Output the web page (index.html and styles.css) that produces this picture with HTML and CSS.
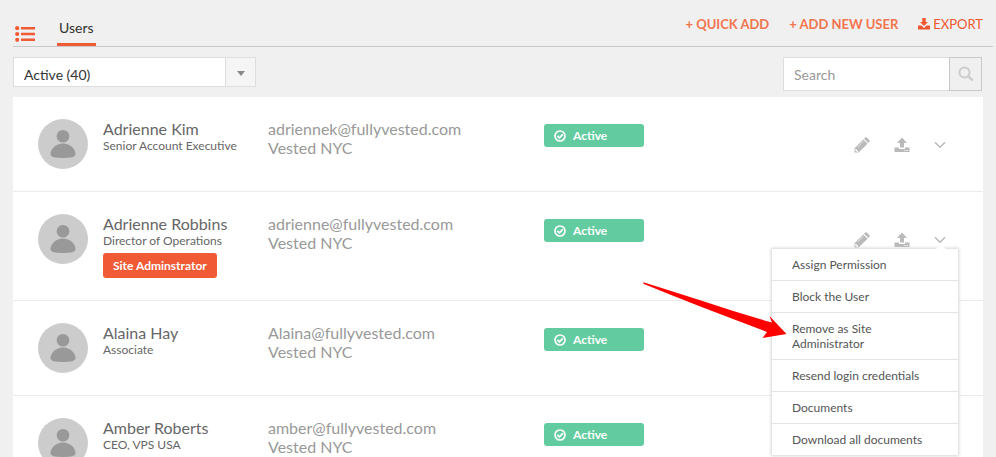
FILE: index.html
```html
<!DOCTYPE html>
<html lang="en">
<head>
    <meta charset="UTF-8">
    <meta name="viewport" content="width=device-width, initial-scale=1.0">
    <title>Users</title>
    <link rel="stylesheet" href="styles.css">
</head>
<body>
    <!-- shared icons -->
    <svg class="sprite" aria-hidden="true">
        <symbol id="avatar" viewBox="0 0 50 50">
            <circle cx="25" cy="25" r="25" fill="#cccccc"/>
            <circle cx="25" cy="17.3" r="6.3" fill="#999999"/>
            <path d="M12.5 35.500c0-6 5.500-11 12.500-11s12.500 5 12.500 11q0 3.500-12.500 3.500t-12.500-3.500z" fill="#999999"/>
        </symbol>
        <symbol id="check" viewBox="0 0 12 12">
            <circle cx="6" cy="6" r="5" fill="none" stroke="#fff" stroke-width="1.700"/>
            <path d="M3.400 5.900l2 2 3.400-3.500" fill="none" stroke="#fff" stroke-width="1.900"/>
        </symbol>
        <symbol id="pencil" viewBox="0 0 16 16">
            <path d="M0.500 15.500V11.300L9.300 2.500l4.200 4.200L4.700 15.500z" fill="#b9b9b9"/>
            <path d="M10 1.800l1.200-1.200q.8-.8 1.600 0l2.600 2.600q.8.8 0 1.600L14.200 6z" fill="#b9b9b9"/>
            <path d="M1.700 11.900l2.400 2.400-1 .4-1.800-1.800zM3.600 10l5.700-5.700" fill="#fff" stroke="#fff" stroke-width=".6"/>
        </symbol>
        <symbol id="upload" viewBox="0 0 16 16">
            <path d="M8 .5l5 5.500H10v4.500H6V6H3z" fill="#b9b9b9"/>
            <path d="M.5 10.500H5v1.500h6v-1.500h4.500V15H.5z" fill="#b9b9b9"/>
            <path d="M10.500 13h1.200v1h-1.200zM12.800 13H14v1h-1.200z" fill="#fff"/>
        </symbol>
        <symbol id="chevron" viewBox="0 0 12 8">
            <path d="M1 1.200l5 5 5-5" fill="none" stroke="#b9b9b9" stroke-width="1.500"/>
        </symbol>
    </svg>

    <header class="header">
        <nav class="tabs">
            <a class="list-link" href="#" aria-label="List">
                <svg width="20" height="16" viewBox="0 0 20 16" fill="#f05a35">
                    <circle cx="2.200" cy="2.200" r="2.100"/><circle cx="2.200" cy="8" r="2.100"/><circle cx="2.200" cy="13.800" r="2.100"/>
                    <path d="M6 1h14v2.500H6zM6 6.800h14v2.500H6zM6 12.500h14V15H6z"/>
                </svg>
            </a>
            <a class="tab" href="#">Users</a>
        </nav>
        <div class="links">
            <a class="add" href="#">+ QUICK ADD</a>
            <a class="add" href="#">+ ADD NEW USER</a>
            <a class="export" href="#">
                <svg width="12" height="12" viewBox="0 0 12 12" fill="#f0562f"><path d="M4.300 0h3.400v4H10L6 8 2 4h2.300zM0 7.500h3.500L6 10l2.500-2.500H12V11.500H0z"/></svg>EXPORT</a>
        </div>
    </header>

    <main class="content">
        <form class="toolbar">
            <div class="select-box">
                <select class="select" aria-label="Status">
                    <option>Active (40)</option>
                </select>
            </div>
            <div class="search">
                <input class="search-input" type="text" placeholder="Search" aria-label="Search">
                <button class="search-btn" type="button" aria-label="Search">
                    <svg width="16" height="16" viewBox="0 0 16 16" fill="none" stroke="#cccccc"><circle cx="6.500" cy="6.500" r="5" stroke-width="2"/><path d="M10.300 10.300l4.400 4.400" stroke-width="2.400"/></svg>
                </button>
            </div>
        </form>

        <ul class="users">
            <li class="user">
                <svg class="avatar"><use href="#avatar"/></svg>
                <div class="info">
                    <div class="name">Adrienne Kim</div>
                    <div class="job">Senior Account Executive</div>
                </div>
                <div class="contact">
                    <div>adriennek@fullyvested.com</div>
                    <div>Vested NYC</div>
                </div>
                <div class="status"><svg class="check"><use href="#check"/></svg>Active</div>
                <div class="actions">
                    <button class="icon-btn" type="button" aria-label="Edit"><svg class="icon"><use href="#pencil"/></svg></button>
                    <button class="icon-btn" type="button" aria-label="Upload"><svg class="icon"><use href="#upload"/></svg></button>
                    <button class="icon-btn" type="button" aria-label="More"><svg class="chevron"><use href="#chevron"/></svg></button>
                </div>
            </li>
            <li class="user">
                <svg class="avatar"><use href="#avatar"/></svg>
                <div class="info">
                    <div class="name">Adrienne Robbins</div>
                    <div class="job">Director of Operations</div>
                    <span class="role">Site Adminstrator</span>
                </div>
                <div class="contact">
                    <div>adrienne@fullyvested.com</div>
                    <div>Vested NYC</div>
                </div>
                <div class="status"><svg class="check"><use href="#check"/></svg>Active</div>
                <div class="actions">
                    <button class="icon-btn" type="button" aria-label="Edit"><svg class="icon"><use href="#pencil"/></svg></button>
                    <button class="icon-btn" type="button" aria-label="Upload"><svg class="icon"><use href="#upload"/></svg></button>
                    <button class="icon-btn" type="button" aria-label="More" aria-expanded="true"><svg class="chevron"><use href="#chevron"/></svg></button>
                    <ul class="menu">
                        <li><a href="#">Assign Permission</a></li>
                        <li><a href="#">Block the User</a></li>
                        <li><a href="#">Remove as Site Administrator</a></li>
                        <li><a href="#">Resend login credentials</a></li>
                        <li><a href="#">Documents</a></li>
                        <li><a href="#">Download all documents</a></li>
                    </ul>
                    <!-- pointer to the remove item -->
                    <svg class="pointer" width="144" height="58" viewBox="0 0 144 58"><path d="M.5.300L58 18.500Q92 30 129 40.500L126.500 34 143.500 52l-24 4 4.500-6Q90 37 56 24Q28 13 .3 1.700z" fill="#ff0000"/></svg>
                </div>
            </li>
            <li class="user">
                <svg class="avatar"><use href="#avatar"/></svg>
                <div class="info">
                    <div class="name">Alaina Hay</div>
                    <div class="job">Associate</div>
                </div>
                <div class="contact">
                    <div>Alaina@fullyvested.com</div>
                    <div>Vested NYC</div>
                </div>
                <div class="status"><svg class="check"><use href="#check"/></svg>Active</div>
            </li>
            <li class="user">
                <svg class="avatar"><use href="#avatar"/></svg>
                <div class="info">
                    <div class="name">Amber Roberts</div>
                    <div class="job">CEO, VPS USA</div>
                </div>
                <div class="contact">
                    <div>amber@fullyvested.com</div>
                    <div>Vested NYC</div>
                </div>
                <div class="status"><svg class="check"><use href="#check"/></svg>Active</div>
            </li>
        </ul>
    </main>
</body>
</html>
```
FILE: styles.css
```css
*{
    box-sizing: border-box;
    margin: 0;
    padding: 0;
}
body{
    height: 100vh;
    overflow: hidden;
    background-color: #f0f0f0;
    font-family: Lato, "Liberation Sans", sans-serif;
    font-size: 14px;
    color: #333;
}
ul{
    list-style: none;
}
a{
    text-decoration: none;
    color: inherit;
}
svg{
    display: block;
}
button, input, select{
    font: inherit;
}
.sprite{
    position: absolute;
    width: 0;
    height: 0;
}

/* header */
.header{
    display: flex;
    justify-content: space-between;
    height: 47px;
    margin: 0 3px 0 13px;
    border-bottom: 1px solid #c8c8c8;
}
.tabs{
    display: flex;
    align-items: flex-end;
    gap: 22px;
    padding-left: 2px;
}
.list-link{
    padding-bottom: 4px;
}
.tab{
    padding: 0 2px 5px;
    line-height: 20px;
    border-bottom: 3px solid #f05a35;
}
.links{
    display: flex;
    align-items: flex-start;
    gap: 20px;
    padding: 14px 10px 0 0;
    font-size: 13px;
    line-height: 20px;
}
.add{
    font-weight: bold;
    color: #f4744e;
}
.export{
    display: flex;
    align-items: center;
    gap: 3px;
    color: #f0562f;
}

/* filter and search */
.content{
    padding: 10px 13px 0;
}
.toolbar{
    display: flex;
    justify-content: space-between;
    align-items: flex-start;
    margin-bottom: 6px;
}
.select-box{
    position: relative;
    width: 243px;
    border: 1px solid #dedede;
    background-color: #fff;
}
.select-box::before{
    content: "";
    position: absolute;
    top: 0;
    right: 0;
    width: 29px;
    height: 100%;
    border-left: 1px solid #dedede;
    background-color: #f5f5f5;
}
.select-box::after{
    content: "";
    position: absolute;
    top: 13px;
    right: 10px;
    border: 4px solid transparent;
    border-top: 5px solid #888;
    border-bottom: 0;
}
.select{
    display: block;
    width: 100%;
    height: 28px;
    padding: 5px 30px 0 10px;
    border: 0;
    appearance: none;
    background-color: transparent;
    color: #333;
}
.search{
    display: flex;
    padding-right: 1px;
}
.search-input{
    width: 166px;
    height: 34px;
    padding: 0 10px;
    border: 1px solid #dedede;
    border-right: 0;
    background-color: #fff;
}
.search-input::placeholder{
    color: #999;
}
.search-btn{
    display: flex;
    align-items: center;
    justify-content: center;
    width: 33px;
    border: 1px solid #c8c8c8;
    background-color: #f0f0f0;
}

/* users */
.users{
    background-color: #fff;
}
.user{
    display: grid;
    grid-template-columns: 50px 150px 261px 100px 1fr;
    column-gap: 15px;
    align-items: start;
    padding: 22px 25px;
    border-bottom: 1px solid #ebebeb;
}
.avatar{
    width: 50px;
    height: 50px;
}
.name{
    font-size: 16px;
    line-height: 20px;
    color: #666;
}
.job{
    font-size: 12px;
    line-height: 14px;
    color: #666;
}
.role{
    display: inline-block;
    margin-top: 5px;
    padding: 0 10px;
    border-radius: 3px;
    background-color: #f05a35;
    font-size: 12px;
    font-weight: bold;
    line-height: 25px;
    color: #fff;
    vertical-align: top;
}
.contact{
    font-size: 16px;
    line-height: 19px;
    color: #999;
}
.status{
    display: flex;
    align-items: center;
    gap: 7px;
    margin-top: 5px;
    padding-left: 10px;
    border-radius: 3px;
    background-color: #62cb9f;
    font-size: 12px;
    font-weight: bold;
    line-height: 23px;
    color: #fff;
}
.check{
    width: 12px;
    height: 12px;
}
.actions{
    position: relative;
    display: flex;
    justify-content: flex-end;
    align-items: center;
    gap: 24px;
    padding: 18px 12px 0 0;
}
.icon-btn{
    border: 0;
    background: none;
}
.icon{
    width: 16px;
    height: 16px;
}
.chevron{
    width: 12px;
    height: 8px;
}

/* user menu */
.menu{
    position: absolute;
    top: 35px;
    right: 0;
    width: 186px;
    background-color: #fff;
    box-shadow: 0 0 3px 1px #d4d4d4;
    font-size: 12px;
    line-height: 15px;
    color: #555;
}
.menu::before{
    content: "";
    position: absolute;
    top: -5px;
    right: 11px;
    border: 6px solid transparent;
    border-top: 0;
    border-bottom: 6px solid #fff;
}
.menu li + li{
    border-top: 1px solid #e4e4e4;
}
.menu a{
    display: block;
    padding: 8px 20px;
}
.pointer{
    position: absolute;
    top: 68px;
    right: 171px;
}
```
